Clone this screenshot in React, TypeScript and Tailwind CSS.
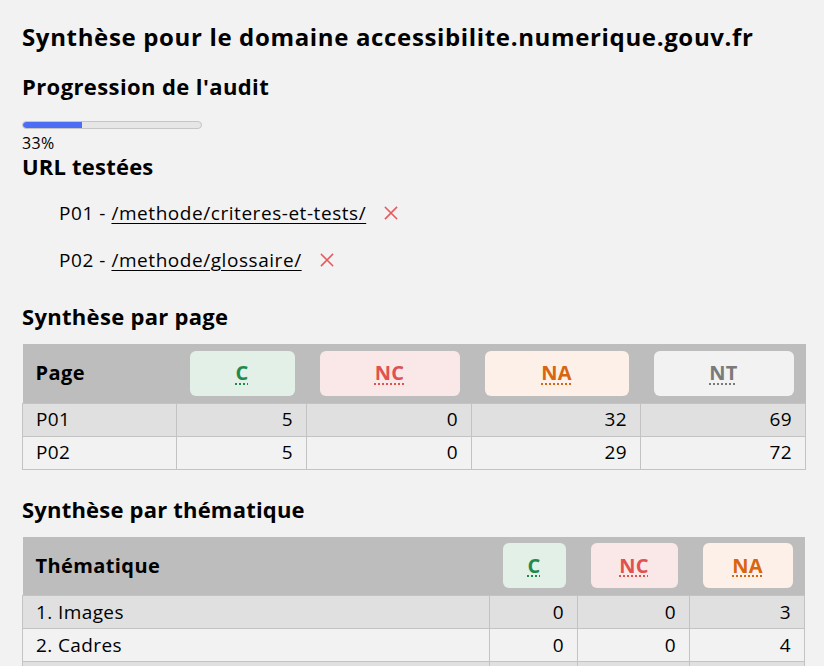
import React from "react";

const font = { fontFamily: '"Open Sans", "Noto Sans", sans-serif' };

function XIcon() {
  return (
    <svg width="14" height="14" viewBox="0 0 14 14" className="ml-[18px] shrink-0">
      <path d="M1.5 1.5 L12.5 12.5 M12.5 1.5 L1.5 12.5" stroke="#e8595c" strokeWidth="1.6" strokeLinecap="square" />
    </svg>
  );
}

type BadgeKind = "C" | "NC" | "NA" | "NT";
const badgeCls: Record<BadgeKind, string> = {
  C: "bg-[#e3f0e7] text-[#1f8a4c] decoration-[#1f8a4c]",
  NC: "bg-[#fae8e8] text-[#e0524f] decoration-[#e0524f]",
  NA: "bg-[#fcf0e8] text-[#d8660e] decoration-[#d8660e]",
  NT: "bg-[#f2f2f2] text-[#7a7a7a] decoration-[#7a7a7a]",
};

function Badge({ k }: { k: BadgeKind }) {
  return (
    <div className={`h-[45px] rounded-[6px] flex items-center justify-center font-bold text-[20px] tracking-[0.3px] ${badgeCls[k]}`}>
      <abbr className="no-underline">
        <span className="underline decoration-dotted decoration-2 underline-offset-[3px]">{k}</span>
      </abbr>
    </div>
  );
}

export default function App() {
  const pageRows = [
    ["P01", 5, 0, 32, 69],
    ["P02", 5, 0, 29, 72],
  ];
  const themeRows = [
    ["1. Images", 0, 0, 3],
    ["2. Cadres", 0, 0, 4],
    ["3. Couleurs", 0, 0, 2],
  ];
  const cell = "border border-[#c3c3c3] px-[13px] h-[33px] text-right";
  return (
    <div className="min-h-[666px] bg-[#f2f2f2] text-black px-[22px] pt-[21px] pb-10 overflow-hidden" style={font}>
      <h1 className="text-[24px] leading-[32px] font-bold tracking-[0.65px] whitespace-nowrap">
        Synthèse pour le domaine accessibilite.numerique.gouv.fr
      </h1>
      <h2 className="mt-[19px] text-[22px] leading-[28px] font-bold tracking-[0.4px]">Progression de l'audit</h2>
      <div className="mt-[21px] w-[180px] h-[8px] rounded-full border border-[#c6c6c6] bg-[#e6e6e6] overflow-hidden">
        <div className="h-full bg-[#4b6ef5] rounded-l-full" style={{ width: "33%" }} />
      </div>
      <div className="mt-[5px] text-[16px] leading-[18px] tracking-[0.3px]">33%</div>
      <h2 className="mt-[1px] text-[22px] leading-[26px] font-bold tracking-[0.2px]">URL testées</h2>
      <ul className="mt-[20px] pl-[37px] flex flex-col gap-[19px] text-[19px] leading-[28px] tracking-[0.55px]">
        <li className="flex items-center">
          <span>P01 -&nbsp;</span>
          <a href="#" className="underline underline-offset-[3px]">/methode/criteres-et-tests/</a>
          <XIcon />
        </li>
        <li className="flex items-center">
          <span>P02 -&nbsp;</span>
          <a href="#" className="underline underline-offset-[3px]">/methode/glossaire/</a>
          <XIcon />
        </li>
      </ul>
      <h2 className="mt-[29px] text-[22px] leading-[26px] font-bold tracking-[0.3px]">Synthèse par page</h2>
      <table className="mt-[15px] w-[783px] table-fixed border-collapse text-[19px] tracking-[0.4px]">
        <colgroup>
          <col className="w-[154px]" />
          <col className="w-[130px]" />
          <col className="w-[165px]" />
          <col className="w-[169px]" />
          <col className="w-[165px]" />
        </colgroup>
        <thead>
          <tr className="bg-[#bdbdbd] h-[59px]">
            <th className="text-left px-[13px] font-bold text-[20px]">Page</th>
            <th className="pl-[13px] pr-[12px]"><Badge k="C" /></th>
            <th className="pl-[13px] pr-[12px]"><Badge k="NC" /></th>
            <th className="pl-[13px] pr-[12px]"><Badge k="NA" /></th>
            <th className="pl-[13px] pr-[12px]"><Badge k="NT" /></th>
          </tr>
        </thead>
        <tbody>
          {pageRows.map((r, i) => (
            <tr key={i} className={i % 2 === 0 ? "bg-[#e0e0e0]" : "bg-[#f2f2f2]"}>
              <td className={`${cell} !text-left`}>{r[0]}</td>
              <td className={cell}>{r[1]}</td>
              <td className={cell}>{r[2]}</td>
              <td className={cell}>{r[3]}</td>
              <td className={cell}>{r[4]}</td>
            </tr>
          ))}
        </tbody>
      </table>
      <h2 className="mt-[26px] text-[22px] leading-[26px] font-bold tracking-[0.2px]">Synthèse par thématique</h2>
      <table className="mt-[15px] w-[782px] table-fixed border-collapse text-[19px] tracking-[0.4px]">
        <colgroup>
          <col className="w-[467px]" />
          <col className="w-[88px]" />
          <col className="w-[112px]" />
          <col className="w-[115px]" />
        </colgroup>
        <thead>
          <tr className="bg-[#bdbdbd] h-[59px]">
            <th className="text-left px-[13px] font-bold text-[20px]">Thématique</th>
            <th className="pl-[13px] pr-[12px]"><Badge k="C" /></th>
            <th className="pl-[13px] pr-[12px]"><Badge k="NC" /></th>
            <th className="pl-[13px] pr-[12px]"><Badge k="NA" /></th>
          </tr>
        </thead>
        <tbody>
          {themeRows.map((r, i) => (
            <tr key={i} className={i % 2 === 0 ? "bg-[#e0e0e0]" : "bg-[#f2f2f2]"}>
              <td className={`${cell} !text-left`}>{r[0]}</td>
              <td className={cell}>{r[1]}</td>
              <td className={cell}>{r[2]}</td>
              <td className={cell}>{r[3]}</td>
            </tr>
          ))}
        </tbody>
      </table>
    </div>
  );
}
